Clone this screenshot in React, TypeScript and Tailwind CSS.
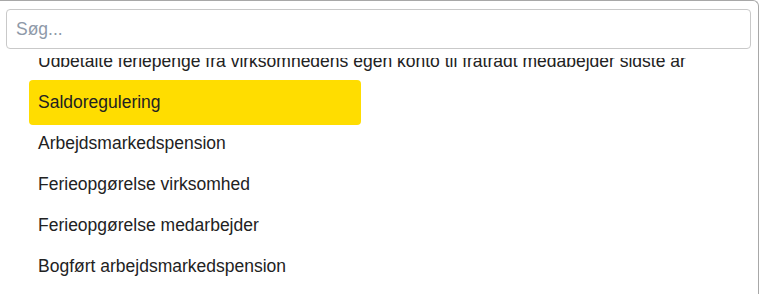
const items = [
  "Udbetalte feriepenge fra virksomhedens egen konto til fratrådt medabejder sidste år",
  "Saldoregulering",
  "Arbejdsmarkedspension",
  "Ferieopgørelse virksomhed",
  "Ferieopgørelse medarbejder",
  "Bogført arbejdsmarkedspension",
];

export default function App() {
  const active = "Saldoregulering";

  return (
    <div className="w-[760px] h-[294px] overflow-hidden bg-white font-['Liberation_Sans',Arial,sans-serif]">
      <div className="w-[759px] h-[300px] border-t border-r border-[#a8a8a8] rounded-tr-[6px] pt-2 pl-[6px] pr-[7px] flex flex-col">
        <input
          type="text"
          placeholder="Søg..."
          className="h-[40px] w-full border border-[#c9c9c9] rounded-[4px] pl-[9px] text-[17.5px] text-[#222] placeholder:text-[#8e99a8] outline-none"
        />

        {/* scrolled list */}
        <div className="mt-[9px] flex-1 overflow-hidden pl-[23px]">
          <div className="-mt-[17px] flex flex-col">
            {items.map((label) =>
              label === active ? (
                <div
                  key={label}
                  className="w-[332px] h-[45px] -my-[2px] flex items-center pl-[9px] bg-[#ffdd00] rounded-[4px] text-[17.5px] text-[#222] whitespace-nowrap"
                >
                  {label}
                </div>
              ) : (
                <div
                  key={label}
                  className="w-[332px] h-[41px] flex items-center pl-[9px] text-[17.5px] text-[#222] whitespace-nowrap"
                >
                  {label}
                </div>
              ),
            )}
          </div>
        </div>
      </div>
    </div>
  );
}
